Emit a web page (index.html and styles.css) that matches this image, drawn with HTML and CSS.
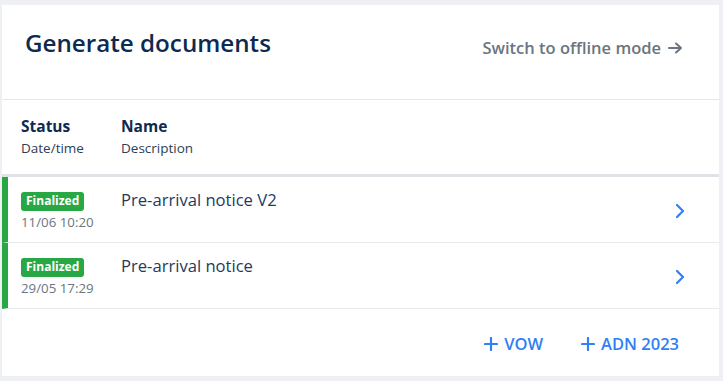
FILE: index.html
```html
<!DOCTYPE html>
<html lang="en">
<head>
    <meta charset="UTF-8">
    <title>Generate documents</title>
    <link rel="stylesheet" href="styles.css">
</head>
<body>
<div class="card">
    <div class="card-head">
        <h1 class="title">Generate documents</h1>
        <a class="offline" href="#">Switch to offline mode
            <svg class="arrow" width="15" height="12" viewBox="0 0 15 12">
                <path d="M1 6 H13 M8 1.5 L13 6 L8 10.5" fill="none" stroke="#6c7480" stroke-width="2" stroke-linecap="round" stroke-linejoin="round"/>
            </svg>
        </a>
    </div>
    <div class="cols">
        <div class="col-status">
            <div class="col-title">Status</div>
            <div class="col-sub">Date/time</div>
        </div>
        <div class="col-name">
            <div class="col-title">Name</div>
            <div class="col-sub">Description</div>
        </div>
    </div>
    <div class="rows">
        <div class="row">
            <div class="col-status">
                <span class="badge">Finalized</span>
                <div class="date">11/06 10:20</div>
            </div>
            <div class="col-name doc-name">Pre-arrival notice V2</div>
            <svg class="chevron" width="10" height="16" viewBox="0 0 10 16">
                <path d="M2 2 L8 8 L2 14" fill="none" stroke="#2f7ff5" stroke-width="2.2" stroke-linecap="round" stroke-linejoin="round"/>
            </svg>
        </div>
        <div class="row">
            <div class="col-status">
                <span class="badge">Finalized</span>
                <div class="date">29/05 17:29</div>
            </div>
            <div class="col-name doc-name">Pre-arrival notice</div>
            <svg class="chevron" width="10" height="16" viewBox="0 0 10 16">
                <path d="M2 2 L8 8 L2 14" fill="none" stroke="#2f7ff5" stroke-width="2.2" stroke-linecap="round" stroke-linejoin="round"/>
            </svg>
        </div>
    </div>
    <div class="actions">
        <a class="add" href="#">
            <svg class="plus" width="14" height="14" viewBox="0 0 14 14">
                <path d="M7 1 V13 M1 7 H13" fill="none" stroke="#2f7ff5" stroke-width="2.2" stroke-linecap="round"/>
            </svg>VOW</a>
        <a class="add" href="#">
            <svg class="plus" width="14" height="14" viewBox="0 0 14 14">
                <path d="M7 1 V13 M1 7 H13" fill="none" stroke="#2f7ff5" stroke-width="2.2" stroke-linecap="round"/>
            </svg>ADN 2023</a>
    </div>
</div>
</body>
</html>
```

FILE: styles.css
```css
body {
    margin: 0;
    padding: 5px 4px 5px 2px;
    background: #eef0f4;
    font-family: "Open Sans", "Noto Sans", sans-serif;
}

.card {
    background: #fff;
    height: 371px;
}

.card-head {
    display: flex;
    justify-content: space-between;
    align-items: flex-start;
    height: 94px;
    padding: 0 36px 0 23px;
    border-bottom: 1px solid #e3e6ea;
}

.title {
    margin: 21px 0 0;
    font-size: 24.2px;
    font-weight: 600;
    color: #0e2a4f;
}

.offline {
    display: flex;
    align-items: center;
    gap: 7px;
    margin-top: 31px;
    font-size: 16.5px;
    font-weight: 600;
    color: #6c7480;
    text-decoration: none;
}

.cols {
    display: flex;
    height: 74px;
    padding: 0 0 0 19px;
    border-bottom: 3px solid #dfe3e8;
}

.col-status {
    width: 100px;
}

.col-title {
    margin-top: 15px;
    font-size: 15.5px;
    font-weight: 700;
    color: #0e2a4f;
}

.col-sub {
    margin-top: 2px;
    font-size: 13.5px;
    color: #2c3e55;
}

.row {
    display: flex;
    align-items: flex-start;
    height: 65px;
    padding: 0 0 0 13px;
    border-left: 6px solid #28a745;
    border-bottom: 1px solid #e8eaed;
}

.badge {
    display: inline-block;
    margin-top: 15px;
    padding: 1px 5px 2px;
    border-radius: 3px;
    background: #28a745;
    color: #fff;
    font-size: 12px;
    font-weight: 700;
    line-height: 16px;
}

.date {
    margin-top: 2px;
    font-size: 13.3px;
    color: #6c7480;
}

.doc-name {
    flex: 1;
    margin-top: 11px;
    font-size: 16.6px;
    color: #243a5e;
}

.chevron {
    margin: 26px 34px 0 0;
}

.actions {
    display: flex;
    justify-content: flex-end;
    gap: 38px;
    padding: 23px 40px 0 0;
}

.add {
    display: flex;
    align-items: center;
    gap: 6px;
    font-size: 16.5px;
    font-weight: 600;
    color: #2f7ff5;
    text-decoration: none;
}
```
